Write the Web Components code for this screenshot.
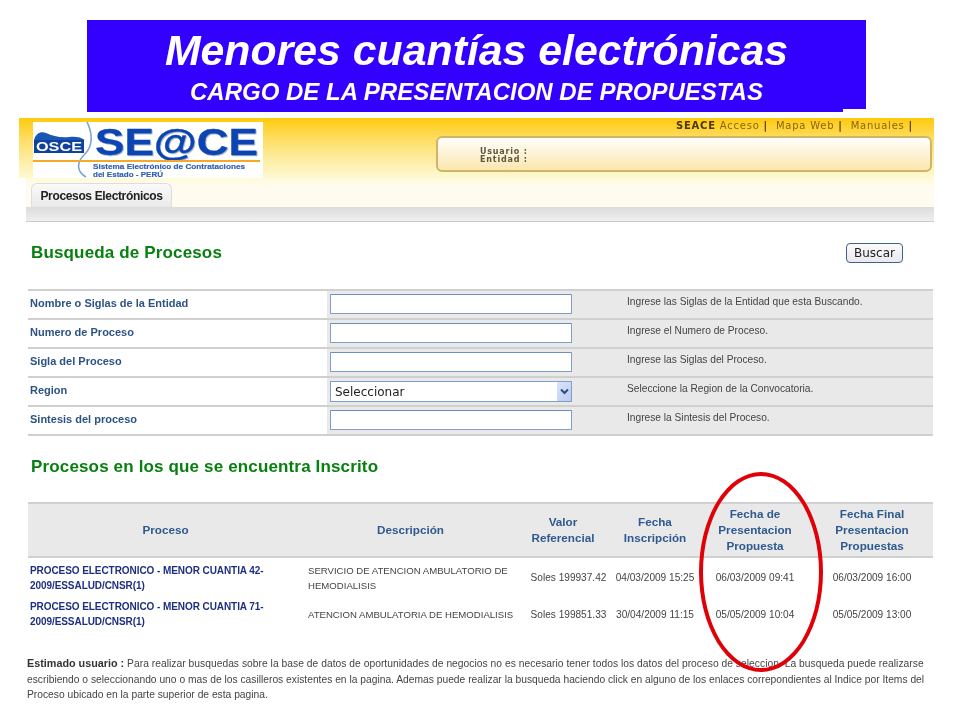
<!DOCTYPE html>
<html lang="es">
<head>
<meta charset="utf-8">
<title>Menores cuantías electrónicas</title>
<style>
  html, body { margin: 0; background: #fff; }
  body { width: 960px; height: 720px; overflow: hidden; position: relative; font-family: "Liberation Sans", Arial, sans-serif; filter: blur(.3px); }
</style>
</head>
<body>
<slide-banner title-text="Menores cuantías electrónicas" subtitle="CARGO DE LA PRESENTACION DE PROPUESTAS"></slide-banner>
<seace-header></seace-header>

<section-title height="67" pad="5" title-text="Busqueda de Procesos"><search-button slot="action">Buscar</search-button></section-title>
<form-table>
  <form-row label="Nombre o Siglas de la Entidad" hint="Ingrese las Siglas de la Entidad que esta Buscando."><text-box></text-box></form-row>
  <form-row label="Numero de Proceso" hint="Ingrese el Numero de Proceso."><text-box></text-box></form-row>
  <form-row label="Sigla del Proceso" hint="Ingrese las Siglas del Proceso."><text-box></text-box></form-row>
  <form-row label="Region" hint="Seleccione la Region de la Convocatoria."><select-box>Seleccionar</select-box></form-row>
  <form-row label="Sintesis del proceso" hint="Ingrese la Sintesis del Proceso."><text-box></text-box></form-row>
</form-table>
<section-title height="66" pad="4" title-text="Procesos en los que se encuentra Inscrito"></section-title>
<results-table></results-table>
<user-note></user-note>
<red-ellipse></red-ellipse>

<script>
class SlideBanner extends HTMLElement {
  connectedCallback() {
    this.attachShadow({ mode: "open" });
    this.shadowRoot.innerHTML = `
      <style>
        :host { display: block; position: relative; width: 779px; height: 92px; margin: 20px 0 6px 87px; background: #3300ff; color: #fff; font-style: italic; font-weight: bold; text-align: center; }
        h1 { margin: 0; padding-top: 5px; font-size: 42.8px; line-height: 50px; }
        h2 { margin: 0; font-size: 24px; line-height: 26px; padding-top: 4px; }
        .notch { position: absolute; right: 0; bottom: 0; width: 23px; height: 3px; background: #fff; }
      </style>
      <h1>${this.getAttribute("title-text")}</h1>
      <h2>${this.getAttribute("subtitle")}</h2>
      <div class="notch"></div>`;
  }
}

class SeaceLogo extends HTMLElement {
  connectedCallback() {
    this.attachShadow({ mode: "open" });
    this.shadowRoot.innerHTML = `
      <style>
        :host { display: block; width: 230px; height: 56px; background: #fff; }
        svg { display: block; }
        .mark { filter: drop-shadow(1px 1px 0 #aab6ca); }
      </style>
      <svg width="230" height="56" viewBox="0 0 230 56" font-family="Liberation Sans, Arial, sans-serif" font-weight="bold">
        <path d="M1 18 C3 11 8 9 13 11 C20 14 27 16 36 15 C42 14 48 15 52 18 Z" fill="#1c56b4"/>
        <rect x="1" y="18" width="50" height="13" fill="#0f429e"/>
        <text x="3" y="29" font-size="12" fill="#fff" textLength="46" lengthAdjust="spacingAndGlyphs">OSCE</text>
        <path d="M54 0 C60 12 60 25 51 33 C43 41 44 50 53 55" fill="none" stroke="#7ea4d6" stroke-width="1.6"/>
        <text class="mark" x="62" y="33" font-size="36" fill="#0c44b4" stroke="#0c44b4" stroke-width=".3" textLength="163" lengthAdjust="spacingAndGlyphs">SE@CE</text>
        <rect x="0" y="38" width="227" height="2" fill="#f4a928"/>
        <text x="60" y="47" font-size="6.5" fill="#2f5fb4" stroke="#2f5fb4" stroke-width=".15" textLength="152" lengthAdjust="spacingAndGlyphs">Sistema Electrónico de Contrataciones</text>
        <text x="60" y="54.5" font-size="6.5" fill="#2f5fb4" stroke="#2f5fb4" stroke-width=".15" textLength="70" lengthAdjust="spacingAndGlyphs">del Estado - PERÚ</text>
      </svg>`;
  }
}

class SeaceHeader extends HTMLElement {
  connectedCallback() {
    this.attachShadow({ mode: "open" });
    this.shadowRoot.innerHTML = `
      <style>
        :host { display: block; width: 915px; margin-left: 19px; font-family: "DejaVu Sans", Verdana, sans-serif; }
        .top { height: 60px; display: flex; background: linear-gradient(#ffca0c 0, #fedb58 18px, #fdeda4 42px, #fef9d2 60px); padding-left: 14px; box-sizing: border-box; }
        seace-logo { margin-top: 4px; }
        .right { flex: 1; display: flex; flex-direction: column; align-items: flex-end; padding-right: 2px; }
        nav { height: 18px; line-height: 16px; font-size: 10px; letter-spacing: .78px; color: #8a6510; white-space: pre; padding-right: 19px; }
        nav b { color: #4a3708; }
        nav i { font-style: normal; font-weight: bold; color: #4a3708; }
        .user { width: 496px; height: 36px; box-sizing: border-box; border: 2px solid #cdb56a; border-radius: 6px; background: linear-gradient(#fffefa, #fbe7ae); padding: 10px 0 0 42px; font-size: 8px; letter-spacing: .8px; line-height: 8px; font-weight: bold; color: #5a5648; }
        .strip { display: flex; height: 29px; margin-left: 7px; box-sizing: border-box; padding: 5px 0 0 5px; background: linear-gradient(#fefbd8, #fffbee 8px); }
        .tab { width: 141px; height: 24px; box-sizing: border-box; border: 1px solid #ddd; border-bottom: 0; border-radius: 6px 6px 0 0; background: linear-gradient(#fafafa, #e9e9e9); font: bold 12px/25px "Liberation Sans", Arial, sans-serif; letter-spacing: -.35px; color: #222; text-align: center; }
        .bar { height: 15px; margin-left: 7px; box-sizing: border-box; border-bottom: 1px solid #ccc; background: linear-gradient(#dcdcdc, #efefef); }
      </style>
      <div class="top">
        <seace-logo></seace-logo>
        <div class="right">
          <nav><b>SEACE</b> Acceso <i>|</i>  Mapa Web <i>|</i>  Manuales <i>|</i></nav>
          <div class="user">Usuario :<br>Entidad :</div>
        </div>
      </div>
      <div class="strip"><div class="tab">Procesos Electrónicos</div></div>
      <div class="bar"></div>`;
  }
}

class SectionTitle extends HTMLElement {
  connectedCallback() {
    this.attachShadow({ mode: "open" });
    this.shadowRoot.innerHTML = `
      <style>
        :host { display: flex; align-items: center; justify-content: space-between; box-sizing: border-box; width: 905px; height: ${this.getAttribute("height")}px; margin-left: 28px; padding: 0 30px ${this.getAttribute("pad")}px 3px; }
        h3 { margin: 0; font-size: 17px; color: #07800f; font-weight: bold; letter-spacing: .15px; }
      </style>
      <h3>${this.getAttribute("title-text")}</h3>
      <slot name="action"></slot>`;
  }
}

class SearchButton extends HTMLElement {
  connectedCallback() {
    this.attachShadow({ mode: "open" });
    this.shadowRoot.innerHTML = `
      <style>
        :host { display: block; width: 57px; height: 20px; box-sizing: border-box; border: 1px solid #3f6288; border-radius: 4px; background: linear-gradient(#fbfbfb, #e9e9ef); font: 12px/18px "DejaVu Sans", Verdana, sans-serif; color: #222; text-align: center; }
      </style>
      <slot></slot>`;
  }
}

class FormTable extends HTMLElement {
  connectedCallback() {
    this.attachShadow({ mode: "open" });
    this.shadowRoot.innerHTML = `
      <style>:host { display: block; width: 905px; margin-left: 28px; border-bottom: 2px solid #d0d0d0; }</style>
      <slot></slot>`;
  }
}

class FormRow extends HTMLElement {
  connectedCallback() {
    this.attachShadow({ mode: "open" });
    this.shadowRoot.innerHTML = `
      <style>
        :host { display: grid; grid-template-columns: 299px 300px 1fr; height: 29px; box-sizing: border-box; border-top: 2px solid #d0d0d0; font-size: 11px; }
        .label { padding: 5px 0 0 2px; font-weight: bold; color: #2c5383; line-height: 15px; }
        .field { background: #e9e9e9; padding: 3px 0 0 3px; }
        .hint { background: #e9e9e9; margin-left: -1px; padding: 3px 0 0 1px; font-size: 10.2px; line-height: 15px; color: #444; }
      </style>
      <div class="label">${this.getAttribute("label")}</div>
      <div class="field"><slot></slot></div>
      <div class="hint">${this.getAttribute("hint")}</div>`;
  }
}

class TextBox extends HTMLElement {
  connectedCallback() {
    this.attachShadow({ mode: "open" });
    this.shadowRoot.innerHTML = `
      <style>:host { display: block; width: 242px; height: 20px; box-sizing: border-box; border: 1px solid #7f9fc9; border-top-color: #6b8fc0; border-radius: 1px; background: #fff; }</style>`;
  }
}

class SelectBox extends HTMLElement {
  connectedCallback() {
    this.attachShadow({ mode: "open" });
    this.shadowRoot.innerHTML = `
      <style>
        :host { display: flex; width: 242px; height: 21px; box-sizing: border-box; border: 1px solid #7f9fc9; background: #fff; font: 12px/20px "DejaVu Sans", Verdana, sans-serif; color: #222; padding-left: 4px; justify-content: space-between; }
        .arrow { width: 14px; background: linear-gradient(135deg, #dbe5f8, #b9cbee); display: flex; align-items: center; justify-content: center; }
      </style>
      <span><slot></slot></span>
      <div class="arrow"><svg width="9" height="7" viewBox="0 0 9 7"><path d="M1 1.5 L4.5 5 L8 1.5" fill="none" stroke="#2a4a8a" stroke-width="2"/></svg></div>`;
  }
}

class ResultsTable extends HTMLElement {
  connectedCallback() {
    this.attachShadow({ mode: "open" });
    const heads = ["Proceso", "Descripción", "Valor<br>Referencial", "Fecha<br>Inscripción", "Fecha de<br>Presentacion<br>Propuesta", "Fecha Final<br>Presentacion<br>Propuestas"];
    const rows = [
      ["PROCESO ELECTRONICO - MENOR CUANTIA 42-<br>2009/ESSALUD/CNSR(1)", "SERVICIO DE ATENCION AMBULATORIO DE<br>HEMODIALISIS", "Soles 199937.42", "04/03/2009 15:25", "06/03/2009 09:41", "06/03/2009 16:00"],
      ["PROCESO ELECTRONICO - MENOR CUANTIA 71-<br>2009/ESSALUD/CNSR(1)", "ATENCION AMBULATORIA DE HEMODIALISIS", "Soles 199851.33", "30/04/2009 11:15", "05/05/2009 10:04", "05/05/2009 13:00"],
    ];
    const kinds = ["proc", "desc", "num val", "num", "num", "num last"];
    this.shadowRoot.innerHTML = `
      <style>
        :host { display: block; width: 905px; margin-left: 28px; font-size: 10px; }
        .grid { display: grid; grid-template-columns: 275px 215px 90px 94px 106px 125px; grid-template-rows: 56px 38px 36px; }
        .th { box-sizing: border-box; background: #e9e9e9; border-top: 2px solid #d0d0d0; border-bottom: 2px solid #d0d0d0; display: flex; align-items: center; justify-content: center; text-align: center; font-size: 11.7px; line-height: 16px; font-weight: bold; color: #2f5a8f; }
        .th.last { padding-left: 3px; }
        .td { display: flex; align-items: center; line-height: 15px; color: #444; white-space: nowrap; }
        .num { justify-content: center; font-size: 10.1px; }
        .val { padding-left: 11px; }
        .last { padding-left: 3px; }
        .proc { padding-left: 2px; font-weight: bold; color: #1f2f80; letter-spacing: -.07px; }
        .desc { padding-left: 5px; font-size: 9.6px; }
        .r0.proc, .r0.desc { padding-top: 2px; }
      </style>
      <div class="grid">
        ${heads.map((h, i) => `<div class="th ${i === 5 ? "last" : ""}"><span>${h}</span></div>`).join("")}
        ${rows.map((r, n) => r.map((c, i) => `<div class="td r${n} ${kinds[i]}"><span>${c}</span></div>`).join("")).join("")}
      </div>`;
  }
}

class UserNote extends HTMLElement {
  connectedCallback() {
    this.attachShadow({ mode: "open" });
    this.shadowRoot.innerHTML = `
      <style>
        :host { display: block; margin: 24px 0 0 27px; font-size: 10.28px; line-height: 15.5px; color: #444; white-space: nowrap; }
        b { color: #333; font-size: 10.8px; }
        .first { letter-spacing: .03px; }
      </style>
      <b>Estimado usuario :</b> <span class="first">Para realizar busquedas sobre la base de datos de oportunidades de negocios no es necesario tener todos los datos del proceso de seleccion. La busqueda puede realizarse</span><br>
      escribiendo o seleccionando uno o mas de los casilleros existentes en la pagina. Ademas puede realizar la busqueda haciendo click en alguno de los enlaces correpondientes al Indice por Items del<br>
      Proceso ubicado en la parte superior de esta pagina.`;
  }
}

class RedEllipse extends HTMLElement {
  connectedCallback() {
    this.attachShadow({ mode: "open" });
    this.shadowRoot.innerHTML = `
      <style>:host { position: absolute; left: 699px; top: 472px; width: 124px; height: 200px; box-sizing: border-box; border: 4px solid #e00008; border-radius: 50%; }</style>`;
  }
}

customElements.define("slide-banner", SlideBanner);
customElements.define("seace-logo", SeaceLogo);
customElements.define("seace-header", SeaceHeader);
customElements.define("section-title", SectionTitle);
customElements.define("search-button", SearchButton);
customElements.define("form-table", FormTable);
customElements.define("form-row", FormRow);
customElements.define("text-box", TextBox);
customElements.define("select-box", SelectBox);
customElements.define("results-table", ResultsTable);
customElements.define("user-note", UserNote);
customElements.define("red-ellipse", RedEllipse);
</script>
</body>
</html>
